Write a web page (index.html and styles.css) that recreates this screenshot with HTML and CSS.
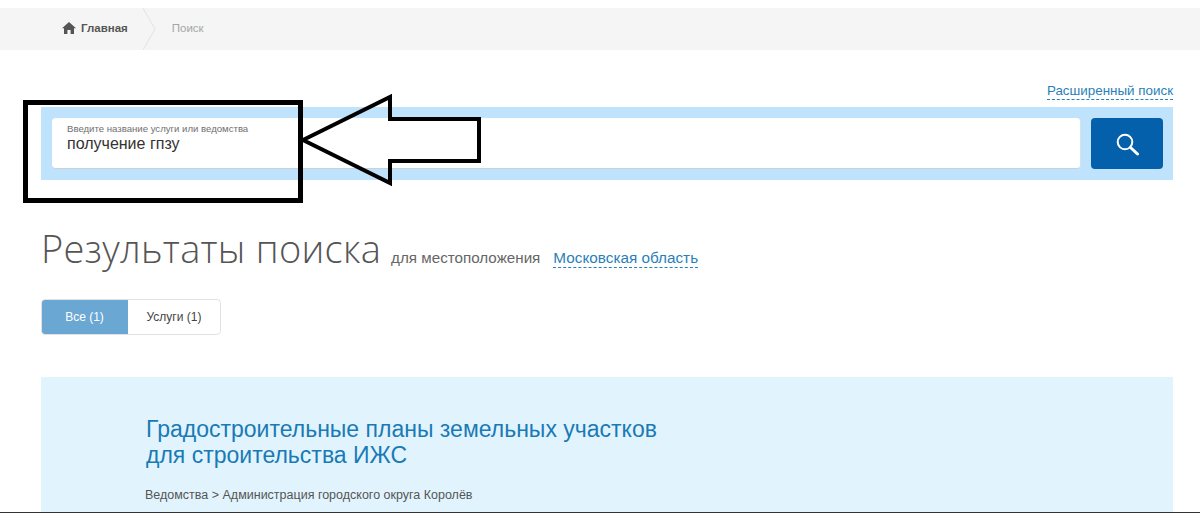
FILE: index.html
```html
<!DOCTYPE html>
<html lang="en">
<head>
    <meta charset="UTF-8">
    <meta name="viewport" content="width=device-width, initial-scale=1.0">
    <title>Поиск</title>
    <link rel="stylesheet" href="styles.css">
</head>
<body>
    <nav class="breadcrumbs">
        <a class="crumb-home" href="#">
            <svg class="home-icon" viewBox="0 0 14 12" width="14" height="12"><path d="M7 0 L14 6.3 L12 6.3 L12 12 L8.6 12 L8.6 8 L5.4 8 L5.4 12 L2 12 L2 6.3 L0 6.3 Z" fill="#555"/></svg>
            Главная
        </a>
        <svg class="crumb-sep" viewBox="0 0 13 42" width="13" height="42"><path d="M0 0 L12 21 L0 42" fill="none" stroke="#e2e2e2"/></svg>
        <span class="crumb-current">Поиск</span>
    </nav>

    <main class="page">
        <div class="advanced-row">
            <a class="dashed-link advanced-link" href="#">Расширенный поиск</a>
        </div>

        <div class="search-band">
            <div class="search-field">
                <label class="search-label">Введите название услуги или ведомства</label>
                <div class="search-value">получение гпзу</div>
            </div>
            <button class="search-btn">
                <svg viewBox="0 0 24 24" width="24" height="24"><circle cx="10" cy="10" r="7.3" fill="none" stroke="#fff" stroke-width="2"/><path d="M15.5 15.5 L22.5 22" stroke="#fff" stroke-width="3" stroke-linecap="round"/></svg>
            </button>
        </div>

        <div class="results-head">
            <h1>Результаты поиска</h1>
            <span class="location-label">для местоположения</span>
            <a class="dashed-link location-link" href="#">Московская область</a>
        </div>

        <div class="tabs">
            <div class="tab tab-active">Все (1)</div>
            <div class="tab">Услуги (1)</div>
        </div>

        <section class="result-card">
            <h2>Градостроительные планы земельных участков<br>для строительства ИЖС</h2>
            <p class="result-meta">Ведомства &gt; Администрация городского округа Королёв</p>
        </section>
    </main>

    <!-- annotation drawn over the screenshot -->
    <svg class="annotation" viewBox="0 0 1200 513" width="1200" height="513">
        <rect x="25.5" y="102.5" width="275" height="98" fill="none" stroke="#000" stroke-width="5"/>
        <path d="M303 140 L390 97 L390 119 L479 119 L479 161 L390 161 L390 183 Z" fill="none" stroke="#000" stroke-width="4"/>
    </svg>
    <div class="bottom-line"></div>
</body>
</html>
```

FILE: styles.css
```css
/* General Styling */
* {
    margin: 0;
    padding: 0;
    box-sizing: border-box;
}

html, body {
    height: 513px;
    overflow: hidden;
}

body {
    font-family: 'Liberation Sans', Arial, sans-serif;
    background: #fff;
    color: #333;
    padding-top: 8px;
    position: relative;
}

a {
    text-decoration: none;
}

/* Breadcrumbs */
.breadcrumbs {
    height: 42px;
    background: #f5f5f5;
    display: flex;
    align-items: center;
    padding: 0 0 2px 62px;
    font-size: 11.5px;
}

.crumb-home {
    display: flex;
    align-items: center;
    gap: 5px;
    color: #555;
    font-weight: bold;
}

.crumb-sep {
    align-self: flex-start;
    margin-left: 15px;
    margin-right: 16px;
}

.crumb-current {
    color: #a5a5a5;
}

/* Page */
.page {
    padding: 0 27px 0 41px;
}

.dashed-link {
    color: #2a7fb8;
    border-bottom: 1px dashed #2a7fb8;
}

.advanced-row {
    display: flex;
    justify-content: flex-end;
    height: 57px;
    padding-top: 33px;
}

.advanced-link {
    font-size: 13.4px;
    line-height: 16px;
    height: 17px;
}

/* Search */
.search-band {
    height: 73px;
    background: #bfe3fc;
    display: flex;
    gap: 10px;
    padding: 11px 10px 11px 11px;
}

.search-field {
    flex: 1;
    height: 51px;
    background: #fff;
    border-radius: 4px;
    border-bottom: 1px solid #c6d3dc;
    border-right: 1px solid #d5e2ea;
    padding: 6px 15px;
}

.search-label {
    display: block;
    font-size: 9.6px;
    line-height: 10px;
    color: #6f6f6f;
}

.search-value {
    font-size: 16px;
    line-height: 19px;
    color: #333;
}

.search-btn {
    width: 72px;
    height: 51px;
    background: #0460aa;
    border: none;
    border-radius: 4px;
    display: flex;
    align-items: center;
    justify-content: center;
}

/* Results heading */
.results-head {
    display: flex;
    align-items: baseline;
    margin-top: 44px;
    height: 48px;
}

.results-head h1 {
    font-family: 'Open Sans', sans-serif;
    font-weight: 300;
    font-size: 38px;
    letter-spacing: 0.3px;
    line-height: 48px;
    color: #555;
}

.location-label {
    font-size: 15.2px;
    color: #666;
    margin-left: 10px;
}

.location-link {
    font-size: 15.3px;
    margin-left: 13px;
}

/* Tabs */
.tabs {
    display: flex;
    width: 180px;
    height: 36px;
    margin-top: 27px;
    border-radius: 4px;
    border: 1px solid #e2e2e2;
    overflow: hidden;
    font-size: 12px;
}

.tab {
    flex: 1;
    display: flex;
    align-items: center;
    justify-content: center;
    color: #444;
}

.tab-active {
    flex: none;
    width: 87px;
    margin: -1px 0 -1px -1px;
    background: #6ba7d3;
    color: #fff;
}

/* Result card */
.result-card {
    margin-top: 42px;
    height: 140px;
    background: #e1f4fe;
    padding: 39px 104px;
}

.result-card h2 {
    font-weight: normal;
    font-size: 23px;
    line-height: 26px;
    color: #1a7ab5;
    padding-left: 1px;
}

.result-meta {
    margin-top: 20px;
    font-size: 12.5px;
    line-height: 14px;
    color: #555;
}

/* Annotation layer */
.annotation {
    position: absolute;
    left: 0;
    top: 0;
}

.bottom-line {
    position: absolute;
    left: 0;
    right: 0;
    bottom: 0;
    height: 1px;
    background: #333;
}
```
